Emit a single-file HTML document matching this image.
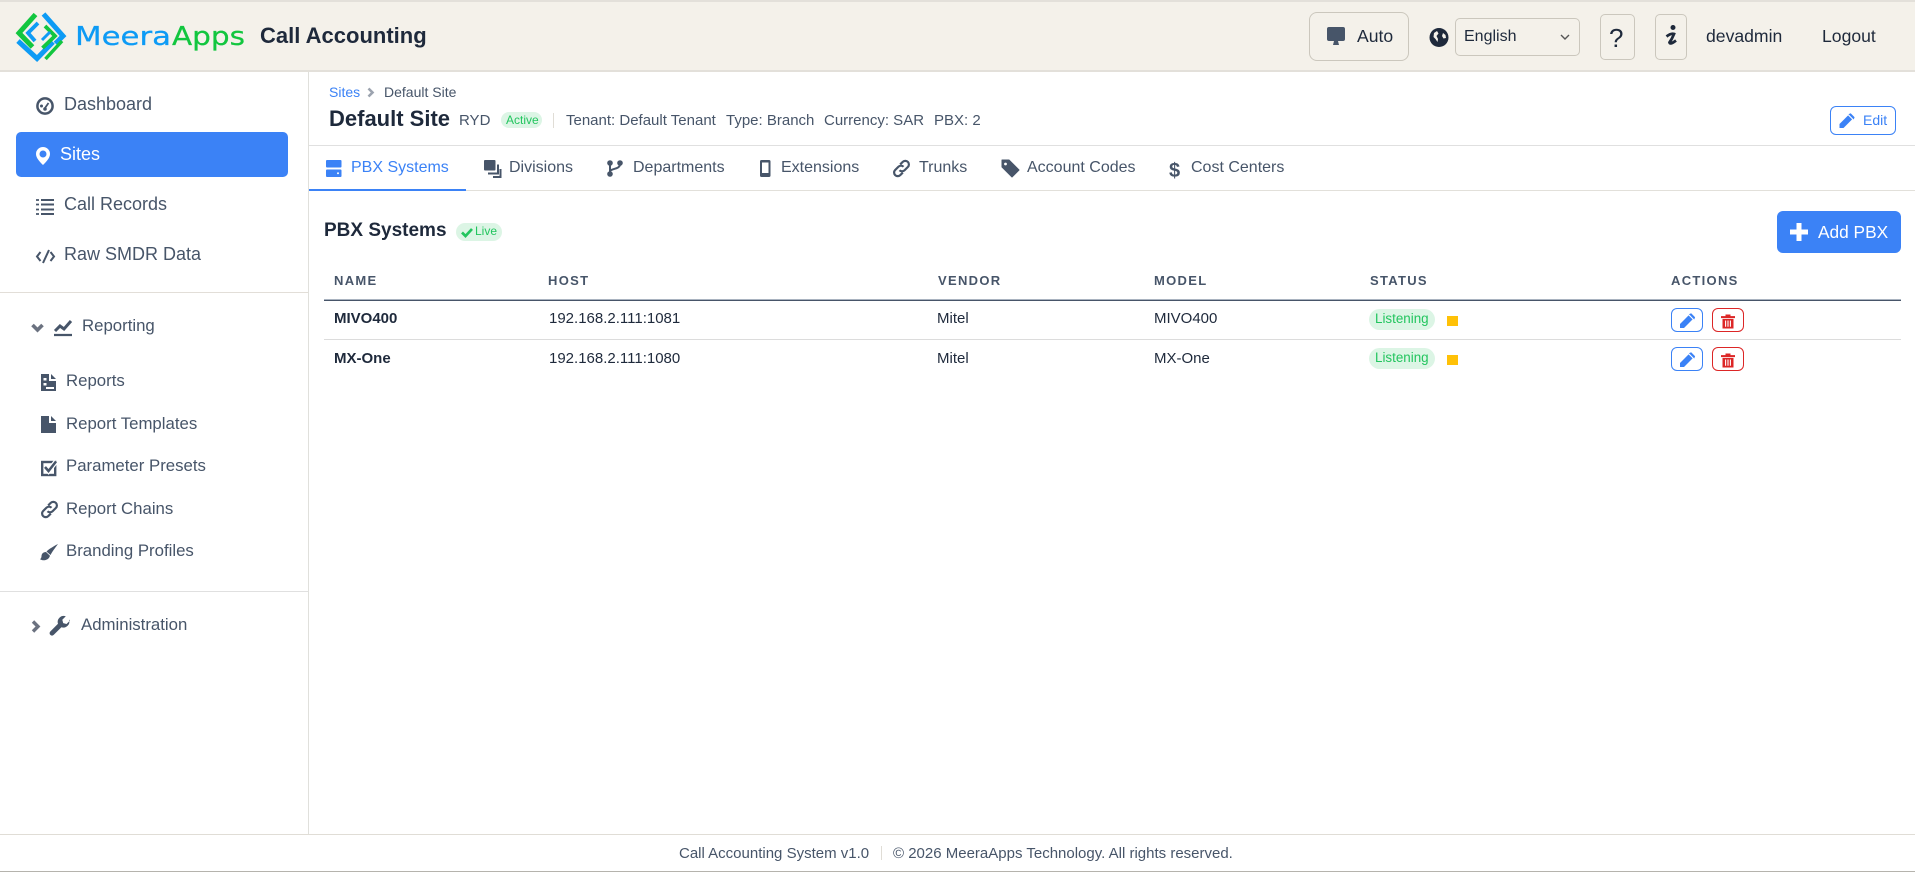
<!DOCTYPE html>
<html lang="en"><head><meta charset="utf-8"><title>Call Accounting</title>
<style>
html,body{margin:0;padding:0;background:#fff;width:1915px;height:872px;overflow:hidden}
body{position:relative;font-family:"Liberation Sans",sans-serif;color:#1e293b}
.t{position:absolute;white-space:nowrap;line-height:20px;height:20px}
.b{position:absolute;box-sizing:border-box}
.s{font-size:18px;color:#475569}
.r{font-size:16.8px;color:#475569}
.tab{font-size:16px;color:#475569}
.m{font-size:14px;color:#475569}
.w{font-size:15px;color:#475569}
.th{font-size:13px;font-weight:700;letter-spacing:1.3px;color:#475569}
.td{font-size:15px;color:#1e293b}
.bd{font-weight:700}
svg{position:absolute;left:0;top:0}
</style></head><body>
<div class="b" style="left:0;top:0;width:1915px;height:72px;background:#f4f1ea;border-top:2px solid #e3e0da;border-bottom:2px solid #e3e0da"></div>
<div class="b" style="left:308px;top:72px;width:1px;height:762px;background:#e0e0dc"></div>
<div class="b" style="left:0;top:292px;width:308px;height:1px;background:#e2ded8"></div>
<div class="b" style="left:0;top:591px;width:308px;height:1px;background:#e0e0e0"></div>
<div class="b" style="left:309px;top:145px;width:1606px;height:1px;background:#e0e0e0"></div>
<div class="b" style="left:309px;top:190px;width:1606px;height:1px;background:#e2e0da"></div>
<div class="b" style="left:309px;top:189px;width:157px;height:2px;background:#3b82f6"></div>
<div class="b" style="left:324px;top:299px;width:1577px;height:1px;background:#a9b3c0"></div>
<div class="b" style="left:324px;top:300px;width:1577px;height:1px;background:#475569"></div>
<div class="b" style="left:324px;top:339px;width:1577px;height:1px;background:#dcdcdc"></div>
<div class="b" style="left:0;top:834px;width:1915px;height:1px;background:#e0ddd6"></div>
<div class="b" style="left:0;top:871px;width:1915px;height:1px;background:#b5b3ad"></div>

<!-- header controls -->
<div class="t" style="left:260px;top:26px;font-size:22px;font-weight:700;line-height:20px;color:#1e293b">Call Accounting</div>
<div class="b" style="left:1309px;top:12px;width:100px;height:49px;border:1px solid #cbc7bd;border-radius:8px"></div>
<div class="t" style="left:1357px;top:26px;font-size:17.6px;color:#1e293b">Auto</div>
<div class="b" style="left:1455px;top:18px;width:125px;height:38px;border:1px solid #cbc7bd;border-radius:5px"></div>
<div class="t" style="left:1464px;top:27px;font-size:16px;color:#1e293b">English</div>
<div class="b" style="left:1600px;top:14px;width:35px;height:46px;border:1px solid #cbc7bd;border-radius:5px"></div>
<div class="t" style="left:1609px;top:28px;font-size:26px;color:#1e293b">?</div>
<div class="b" style="left:1655px;top:14px;width:32px;height:46px;border:1px solid #cbc7bd;border-radius:5px"></div>
<div class="t" style="left:1706px;top:26px;font-size:17.6px;color:#1e293b">devadmin</div>
<div class="t" style="left:1822px;top:26px;font-size:17.6px;color:#1e293b">Logout</div>

<!-- sidebar -->
<div class="t s" style="left:64px;top:94px">Dashboard</div>
<div class="b" style="left:16px;top:132px;width:272px;height:45px;background:#3b82f6;border-radius:5px"></div>
<div class="t s" style="left:60px;top:144px;color:#fff">Sites</div>
<div class="t s" style="left:64px;top:194px">Call Records</div>
<div class="t s" style="left:64px;top:244px">Raw SMDR Data</div>
<div class="t r" style="left:82px;top:316px">Reporting</div>
<div class="t r" style="left:66px;top:371px">Reports</div>
<div class="t r" style="left:66px;top:414px">Report Templates</div>
<div class="t r" style="left:66px;top:456px">Parameter Presets</div>
<div class="t r" style="left:66px;top:499px">Report Chains</div>
<div class="t r" style="left:66px;top:541px">Branding Profiles</div>
<div class="t r" style="left:81px;top:615px">Administration</div>

<!-- page header -->
<div class="t m" style="left:329px;top:82px;color:#3b82f6">Sites</div>
<div class="t m" style="left:384px;top:82px">Default Site</div>
<div class="t bd" style="left:329px;top:109px;font-size:22px">Default Site</div>
<div class="t w" style="left:459px;top:111px">RYD</div>
<div class="b" style="left:501px;top:112px;width:41px;height:16px;background:#dcf5e5;border-radius:8px"></div>
<div class="t" style="left:506px;top:110px;font-size:12px;color:#22c55e">Active</div>
<div class="b" style="left:553px;top:113px;width:1px;height:15px;background:#e0ddd6"></div>
<div class="t w" style="left:566px;top:111px">Tenant: Default Tenant</div>
<div class="t w" style="left:726px;top:111px">Type: Branch</div>
<div class="t w" style="left:824px;top:111px">Currency: SAR</div>
<div class="t w" style="left:934px;top:111px">PBX: 2</div>
<div class="b" style="left:1830px;top:106px;width:66px;height:29px;border:1px solid #3b82f6;border-radius:6px"></div>
<div class="t" style="left:1863px;top:110px;font-size:14px;color:#3b82f6">Edit</div>

<!-- tabs -->
<div class="t tab" style="left:351px;top:158px;color:#3b82f6">PBX Systems</div>
<div class="t tab" style="left:509px;top:158px">Divisions</div>
<div class="t tab" style="left:633px;top:158px">Departments</div>
<div class="t tab" style="left:781px;top:158px">Extensions</div>
<div class="t tab" style="left:919px;top:158px">Trunks</div>
<div class="t tab" style="left:1027px;top:158px">Account Codes</div>
<div class="t tab" style="left:1191px;top:158px">Cost Centers</div>
<div class="t bd" style="left:1169px;top:161px;font-size:20px;color:#475569">$</div>

<!-- section -->
<div class="t bd" style="left:324px;top:221px;font-size:19px">PBX Systems</div>
<div class="b" style="left:456px;top:223px;width:46px;height:18px;background:#dcf5e5;border-radius:9px"></div>
<div class="t" style="left:475px;top:221px;font-size:12px;color:#22c55e">Live</div>
<div class="b" style="left:1777px;top:211px;width:124px;height:42px;background:#3b82f6;border-radius:6px"></div>
<div class="t" style="left:1818px;top:222px;font-size:17.3px;color:#fff">Add PBX</div>

<!-- table -->
<div class="t th" style="left:334px;top:271px">NAME</div>
<div class="t th" style="left:548px;top:271px">HOST</div>
<div class="t th" style="left:938px;top:271px">VENDOR</div>
<div class="t th" style="left:1154px;top:271px">MODEL</div>
<div class="t th" style="left:1370px;top:271px">STATUS</div>
<div class="t th" style="left:1671px;top:271px">ACTIONS</div>
<div class="t td bd" style="left:334px;top:309px">MIVO400</div>
<div class="t td" style="left:549px;top:309px">192.168.2.111:1081</div>
<div class="t td" style="left:937px;top:309px">Mitel</div>
<div class="t td" style="left:1154px;top:309px">MIVO400</div>
<div class="b" style="left:1369px;top:309px;width:66px;height:21px;background:#dcf5e5;border-radius:11px"></div>
<div class="t" style="left:1375px;top:309px;font-size:13.4px;color:#22c55e">Listening</div>
<div class="b" style="left:1447px;top:316px;width:11px;height:10px;background:#ffc107"></div>
<div class="b" style="left:1671px;top:308px;width:32px;height:24px;border:1px solid #3b82f6;border-radius:6px"></div>
<div class="b" style="left:1712px;top:308px;width:32px;height:24px;border:1px solid #dc2626;border-radius:6px"></div>
<div class="t td bd" style="left:334px;top:349px">MX-One</div>
<div class="t td" style="left:549px;top:349px">192.168.2.111:1080</div>
<div class="t td" style="left:937px;top:349px">Mitel</div>
<div class="t td" style="left:1154px;top:349px">MX-One</div>
<div class="b" style="left:1369px;top:348px;width:66px;height:21px;background:#dcf5e5;border-radius:11px"></div>
<div class="t" style="left:1375px;top:348px;font-size:13.4px;color:#22c55e">Listening</div>
<div class="b" style="left:1447px;top:355px;width:11px;height:10px;background:#ffc107"></div>
<div class="b" style="left:1671px;top:347px;width:32px;height:24px;border:1px solid #3b82f6;border-radius:6px"></div>
<div class="b" style="left:1712px;top:347px;width:32px;height:24px;border:1px solid #dc2626;border-radius:6px"></div>

<!-- footer -->
<div class="t w" style="left:679px;top:844px">Call Accounting System v1.0</div>
<div class="b" style="left:881px;top:846px;width:1px;height:14px;background:#e0ddd6"></div>
<div class="t w" style="left:893px;top:844px">© 2026 MeeraApps Technology. All rights reserved.</div>

<svg width="1915" height="872" viewBox="0 0 1915 872" xmlns="http://www.w3.org/2000/svg">
<defs>
<g id="chain" transform="translate(49.5 509.5) scale(.88) translate(-49.5 -509.5)"><path d="M48 504.9L50.9 502A4.1 4.1 0 0 1 56.7 507.800L53 511.500A4.100 4.100 0 0 1 47.200 511.500" fill="none" stroke-width="2.500"/><path d="M51 514.100L48.100 517A4.100 4.100 0 0 1 42.300 511.200L46 507.500A4.100 4.100 0 0 1 51.800 507.500" fill="none" stroke-width="2.500"/></g>
<g id="pen"><path d="M0 14V10L8.600 1.400 12.600 5.400 4 14Z"/><path d="M10 .4L11 0 14.400 3.400 14 4.400Z" stroke-width="1.200"/></g>
<g id="trash"><rect x="0" y="1.600" width="14" height="2"/><rect x="4.500" y="0" width="5" height="2"/><path d="M1.500 4.400H12.500V14H1.500Z"/><path d="M4.600 6V12.200M7 6V12.200M9.400 6V12.200" stroke="#fff" stroke-width="1.100"/></g>
</defs>

<!-- logo -->
<g fill="none" stroke-linejoin="miter">
<path d="M43.500 14L63 36 55.500 43.500" stroke="#0d9bf5" stroke-width="5"/>
<path d="M35.500 14.500L19 33 32.500 47" stroke="#12c63f" stroke-width="5"/>
<path d="M18 41L37 58.500 53 42" stroke="#0d9bf5" stroke-width="5"/>
<path d="M45.500 59L62 41" stroke="#12c63f" stroke-width="3.500"/>
<path d="M45 26L55 36 42.500 48" stroke="#12c63f" stroke-width="3.800"/>
<path d="M38 23L28 33 35 41" stroke="#0d9bf5" stroke-width="3.800"/>
<path d="M50 32L42 40" stroke="#0d9bf5" stroke-width="3"/>
</g>
<text x="75" y="45" font-family="DejaVu Sans,sans-serif" font-size="26" fill="#0d9bf5" stroke="#0d9bf5" stroke-width=".25" textLength="96" lengthAdjust="spacingAndGlyphs">Meera</text>
<text x="172" y="45" font-family="DejaVu Sans,sans-serif" font-size="26" fill="#12c63f" stroke="#12c63f" stroke-width=".25" textLength="73" lengthAdjust="spacingAndGlyphs">Apps</text>

<!-- header icons -->
<path d="M1329 27H1343a2 2 0 0 1 2 2V39a2 2 0 0 1-2 2H1329a2 2 0 0 1-2-2V29a2 2 0 0 1 2-2Z" fill="#475569"/>
<path d="M1334 41H1338L1339 45H1333Z" fill="#475569"/>
<circle cx="1439" cy="37.500" r="9.500" fill="#1e293b"/>
<path d="M1434 33l3-2 1.500 2.500-2 2.500 1.500 3-.5 3-2-3-2-2ZM1443 33l2.500 2 .5 3-2.500.5-1.500-2.500Z" fill="#f4f1ea"/>
<path d="M1561 35l4 4 4-4" fill="none" stroke="#555" stroke-width="1.400"/>
<circle cx="1673" cy="27.500" r="2.500" fill="#1e293b"/>
<path d="M1666.500 36.500Q1671 33 1674 34 1672 39 1669.500 42.500 1670 45 1676 40.500" fill="none" stroke="#1e293b" stroke-width="2.800"/>

<!-- sidebar icons -->
<circle cx="45" cy="106" r="7.600" fill="none" stroke="#475569" stroke-width="2.500"/>
<circle cx="41.500" cy="106" r="1.500" fill="#475569"/><circle cx="45" cy="109" r="1.800" fill="#475569"/><path d="M45 108L48.500 103" stroke="#475569" stroke-width="1.800"/>
<path d="M43 147a7 7 0 0 1 7 7c0 4-4 8-7 11-3-3-7-7-7-11a7 7 0 0 1 7-7Zm0 3.500a3.500 3.500 0 1 0 0 7 3.500 3.500 0 0 0 0-7Z" fill="#fff" fill-rule="evenodd"/>
<g stroke="#475569" stroke-width="1.900">
<path d="M41 200H54M41 204.500H54M41 209.500H54M41 214H54"/>
<path d="M36 200H39M36 204.500H39M36 209.500H39M36 214H39" stroke-width="1.700"/>
</g>
<path d="M40.500 252L37 256.500 40.500 261M49 250L43 263M50.500 252L54 256.500 50.500 261" fill="none" stroke="#475569" stroke-width="2"/>
<path d="M32.500 325L37.500 330 42.500 325" fill="none" stroke="#6b7280" stroke-width="3.600"/>
<path d="M54 335H72" stroke="#475569" stroke-width="2.200"/>
<path d="M55 331L60 326 64 329 71 321" fill="none" stroke="#475569" stroke-width="3"/>
<path d="M41 374H49V381H56V391H41Z" fill="#475569"/><path d="M51 374L56 379H51Z" fill="#475569"/>
<rect x="43.500" y="378" width="3" height="2.500" fill="#fff"/><rect x="43.500" y="383" width="3" height="2.500" fill="#fff"/><rect x="46" y="387" width="8" height="2" fill="#fff"/>
<path d="M41 416H49V423H56V433H41Z" fill="#475569"/><path d="M51 416L56 421H51Z" fill="#475569"/>
<rect x="42.200" y="462" width="13" height="13" fill="none" stroke="#475569" stroke-width="2.400"/>
<path d="M45 467L48.500 471 56 461.500" fill="none" stroke="#fff" stroke-width="5"/>
<path d="M45 467L48.500 471 56 461.500" fill="none" stroke="#475569" stroke-width="2.500"/>
<use href="#chain" stroke="#475569"/>
<path d="M58 544C55 548 52 552 50.500 555L46.500 551.500C49 549 54 546 58 544Z" fill="#475569"/>
<path d="M46 552c-3 0-4.500 2-4.500 4.200 0 1.500-.8 2.500-1.500 3 3 1.800 8.500 1.500 10-3.500Z" fill="#475569"/>
<path d="M33 621.500L38 626.500 33 631.500" fill="none" stroke="#6b7280" stroke-width="3.400"/>
<path d="M70 620.500l-3.500 3.500-3.300-.9-.9-3.300 3.500-3.500a6 6 0 0 0-7.800 7.500l-7.700 7.700a2.400 2.400 0 0 0 3.400 3.400l7.700-7.700a6 6 0 0 0 7.600-7.700Z" fill="#475569"/>

<!-- breadcrumb -->
<path d="M368.500 88.500L372.500 92.500 368.500 96.500" fill="none" stroke="#9ca3af" stroke-width="2.600"/>
<use href="#pen" x="1839.500" y="114" fill="#3b82f6" stroke="#3b82f6" stroke-width="0"/>

<!-- tab icons -->
<rect x="326" y="160" width="15.500" height="7.500" rx="1" fill="#3b82f6"/>
<rect x="326" y="169.500" width="15.500" height="7.500" rx="1" fill="#3b82f6"/><circle cx="338" cy="173.300" r="1" fill="#fff"/>
<rect x="484" y="160" width="11.500" height="10.500" rx="1" fill="#475569"/>
<path d="M498 164.500V173.500H488M500.500 169V177H493" fill="none" stroke="#475569" stroke-width="2"/>
<circle cx="610" cy="163" r="2.800" fill="#475569"/><circle cx="620" cy="163" r="2.800" fill="#475569"/><circle cx="610" cy="174" r="2.800" fill="#475569"/>
<path d="M610 163V174M620 164C620 170 610 168 610 172" fill="none" stroke="#475569" stroke-width="2"/>
<rect x="760" y="160" width="10.500" height="17" rx="1.500" fill="#475569"/><rect x="762" y="162.500" width="6.500" height="10.500" fill="#fff"/>
<use href="#chain" transform="translate(852,-341)" stroke="#475569"/>
<path d="M1002 160H1009L1019 170 1012 177 1002 167Z" fill="#475569" stroke="#475569" stroke-linejoin="round"/>
<circle cx="1005.500" cy="164" r="1.400" fill="#fff"/>

<!-- section icons -->
<path d="M462 232.500L465.500 236 472 229" fill="none" stroke="#22c55e" stroke-width="2.700"/>
<path d="M1799 223V241M1790 232H1808" stroke="#fff" stroke-width="5"/>

<!-- table icons -->
<use href="#pen" x="1680" y="314" fill="#3b82f6" stroke="#3b82f6" stroke-width="0"/>
<use href="#pen" x="1680" y="353" fill="#3b82f6" stroke="#3b82f6" stroke-width="0"/>
<use href="#trash" x="1721" y="314.500" fill="#dc2626"/>
<use href="#trash" x="1721" y="353.500" fill="#dc2626"/>
</svg>
</body></html>
